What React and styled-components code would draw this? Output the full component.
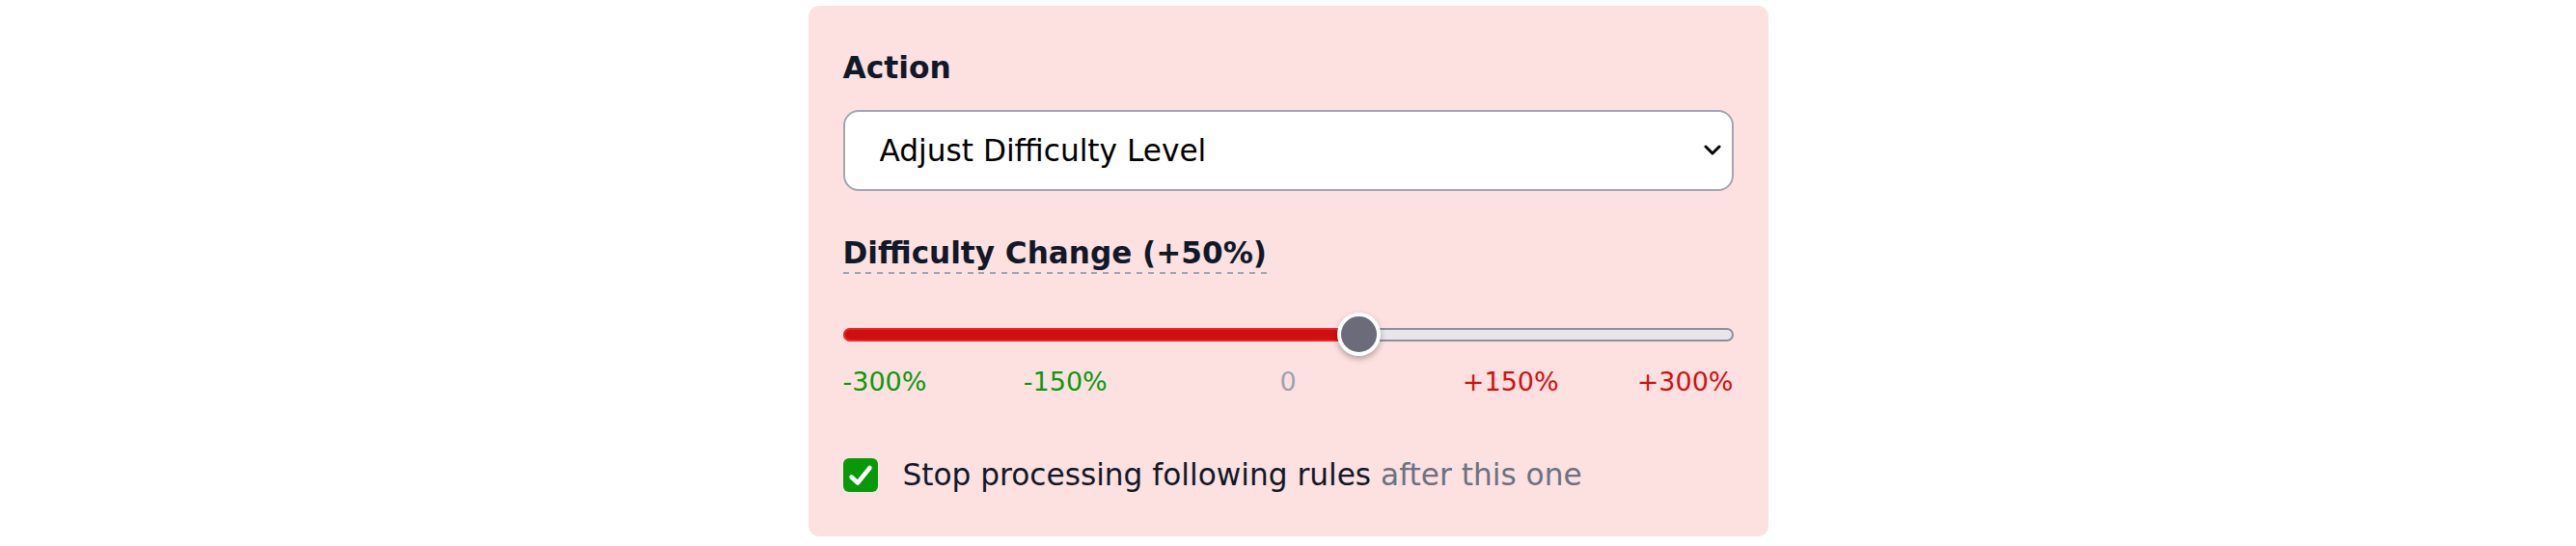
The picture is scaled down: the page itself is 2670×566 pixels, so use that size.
import React, { useState } from 'react';
import styled, { createGlobalStyle } from 'styled-components';

const GlobalStyle = createGlobalStyle`
    body{
        margin: 0;
        background-color: #ffffff;
        font-family: "DejaVu Sans", "Liberation Sans", sans-serif;
    }
`

const Panel = styled.div`
    background-color: #fde1e1;
    border-radius: 11px;
    box-sizing: border-box;
    display: flex;
    flex-direction: column;
    margin: 6px auto 0;
    padding: 42px 36px 42px;
    width: 995px;
`

const FieldLabel = styled.div`
    color: #111827;
    font-size: 31.3px;
    font-weight: bold;
    line-height: 44px;
`

const SelectWrap = styled.div`
    margin-top: 22px;
    position: relative;

    svg{
        pointer-events: none;
        position: absolute;
        right: 13px;
        top: 36px;
    }
`

const Select = styled.select`
    appearance: none;
    background-color: #ffffff;
    border: 2px solid #a1a5b1;
    border-radius: 16px;
    box-sizing: border-box;
    color: #000000;
    font-family: "DejaVu Sans", sans-serif;
    font-size: 31.2px;
    height: 84px;
    outline: none;
    padding: 0 60px 0 36px;
    width: 100%;
`

const SliderLabelRow = styled.div`
    margin-top: 44px;
`

const DashedLabel = styled.span`
    background-image: repeating-linear-gradient(to right, #9ca3af 0 6px, transparent 6px 11.7px);
    background-position: left bottom;
    background-repeat: no-repeat;
    background-size: 100% 2px;
    color: #111827;
    display: inline-block;
    font-size: 31.1px;
    font-weight: bold;
    line-height: 40px;
    padding-bottom: 2px;
`

const SliderBox = styled.div`
    align-items: center;
    display: flex;
    height: 45px;
    margin-top: 40px;
    position: relative;
`

const Track = styled.div`
    background-color: #e6e6eb;
    border: 2px solid #8f8f9b;
    border-radius: 8px;
    box-sizing: border-box;
    display: flex;
    height: 14px;
    width: 100%;
`

const Fill = styled.div`
    background-color: #d01010;
    border: 2px solid #ec2626;
    border-radius: 8px 0 0 8px;
    box-sizing: border-box;
    height: 14px;
    margin: -2px 0 0 -2px;
`

const Thumb = styled.div`
    background-color: #6b6b7a;
    border: 4.5px solid #ffffff;
    border-radius: 50%;
    box-shadow: 0 3px 6px rgba(0, 0, 0, 0.3);
    box-sizing: border-box;
    height: 45px;
    margin-left: -22.5px;
    position: absolute;
    top: 0;
    width: 45px;
`

const Ticks = styled.div`
    height: 36px;
    margin-top: 9px;
    position: relative;
`

const Tick = styled.span`
    color: ${props => props.tone === 'green' ? '#0a990a' : props.tone === 'red' ? '#d20f0f' : '#9ca3af'};
    font-size: 27px;
    line-height: 36px;
    position: absolute;
    top: 0;
    white-space: nowrap;
    ${props => props.edge === 'start' ? 'left: 0;' : ''}
    ${props => props.edge === 'end' ? 'right: 0;' : ''}
    ${props => props.at !== undefined ? `left: ${props.at}%; transform: translateX(-50%);` : ''}
`

const CheckRow = styled.label`
    align-items: center;
    display: flex;
    gap: 26px;
    height: 44px;
    margin-top: 56px;
`

const CheckBox = styled.span`
    align-items: center;
    background-color: #079907;
    border-radius: 6px;
    display: flex;
    flex-shrink: 0;
    height: 35px;
    justify-content: center;
    width: 36px;
`

const CheckText = styled.span`
    color: #111827;
    font-size: 31.2px;
    line-height: 44px;

    span{
        color: #6b7280;
    }
`

const MIN = -300;
const MAX = 300;

function App() {
    const [value] = useState(50);
    const pct = ((value - MIN) / (MAX - MIN)) * 100;

    return (
        <>
        <GlobalStyle />
        <Panel>
            <FieldLabel>Action</FieldLabel>
            <SelectWrap>
                <Select defaultValue="difficulty">
                    <option value="difficulty">Adjust Difficulty Level</option>
                </Select>
                <svg width="18" height="12" viewBox="0 0 18 12">
                    <path d="M2 2 L9 9 L16 2" fill="none" stroke="#000" strokeWidth="3" strokeLinecap="round" strokeLinejoin="round" />
                </svg>
            </SelectWrap>

            <SliderLabelRow>
                <DashedLabel>Difficulty Change (+{value}%)</DashedLabel>
            </SliderLabelRow>

            <SliderBox>
                <Track>
                    <Fill style={{ width: `calc(${pct}% + 2px)` }} />
                </Track>
                <Thumb style={{ left: `calc(22.5px + (100% - 45px) * ${pct / 100})` }} />
            </SliderBox>

            <Ticks>
                <Tick tone="green" edge="start">-300%</Tick>
                <Tick tone="green" at={25}>-150%</Tick>
                <Tick tone="gray" at={50}>0</Tick>
                <Tick tone="red" at={75}>+150%</Tick>
                <Tick tone="red" edge="end">+300%</Tick>
            </Ticks>

            <CheckRow>
                <CheckBox>
                    <svg width="36" height="35" viewBox="0 0 36 35">
                        <path d="M8.5 19.5 L15 25.5 L27.5 10" fill="none" stroke="#fff" strokeWidth="4.5" strokeLinecap="round" strokeLinejoin="round" />
                    </svg>
                </CheckBox>
                <CheckText>Stop processing following rules <span>after this one</span></CheckText>
            </CheckRow>
        </Panel>
        </>
    )
}

export default App;
